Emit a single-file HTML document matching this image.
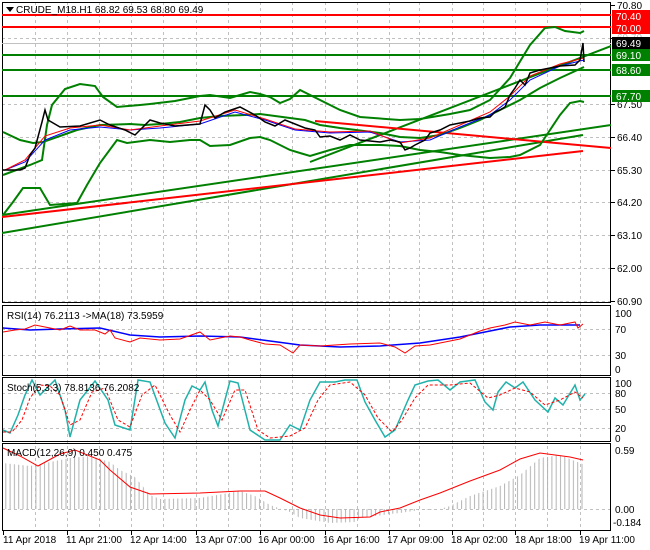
<!DOCTYPE html>
<html><head><meta charset="utf-8"><style>
html,body{margin:0;padding:0;background:#fff;}
svg{display:block;font-family:"Liberation Sans",sans-serif;font-size:10px;}
</style></head><body>
<svg width="650" height="550" viewBox="0 0 650 550" xmlns="http://www.w3.org/2000/svg">
<defs>
<pattern id="hist" width="4.3" height="10" patternUnits="userSpaceOnUse"><rect x="1" y="0" width="1" height="10" fill="#b4b4b4"/></pattern>
<clipPath id="cm"><rect x="2" y="2" width="609" height="300"/></clipPath>
</defs>
<rect width="650" height="550" fill="#fff"/>
<g stroke="#c0c0c0" stroke-dasharray="3,3" stroke-width="1">
<path d="M35.5 2V531M67.5 2V531M99.5 2V531M131.5 2V531M163.5 2V531M196.5 2V531M228.5 2V531M260.5 2V531M292.5 2V531M325.5 2V531M357.5 2V531M389.5 2V531M419.5 2V531M452.5 2V531M483.5 2V531M515.5 2V531M547.5 2V531M580.5 2V531"/>
<path d="M2 38.5H611M2 104.5H611M2 137.5H611M2 170.5H611M2 202.5H611M2 235.5H611M2 268.5H611M2 301.5H611"/>
<path d="M2 329.5H611M2 355.5H611M2 393.5H611M2 409.5H611M2 428.5H611M2 509.5H611"/>
</g>
<g fill="none" stroke="#000" stroke-width="1">
<rect x="2.5" y="2.5" width="608" height="300"/>
<rect x="2.5" y="305.5" width="608" height="70"/>
<rect x="2.5" y="377.5" width="608" height="64"/>
<rect x="2.5" y="443.5" width="608" height="87"/>
</g>
<g stroke="#000"><path d="M3.5 531v4M67.5 531v4M131.5 531v4M196.5 531v4M260.5 531v4M325.5 531v4M389.5 531v4M452.5 531v4M515.5 531v4M580.5 531v4"/>
<path d="M611 5.5h4M611 38.5h4M611 104.5h4M611 137.5h4M611 170.5h4M611 202.5h4M611 235.5h4M611 268.5h4M611 301.5h4"/></g>
<g clip-path="url(#cm)">
<path d="M2 43.5H611" stroke="#c0c0c0"/>
<path d="M2 15H611M2 27H611" stroke="#f00" stroke-width="2"/>
<path d="M2 55H611M2 70H611M2 96H611" stroke="#008000" stroke-width="2"/>
<path d="M2 233L583 135M2 215L611 125M310 162L611 46" stroke="#008000" stroke-width="2" fill="none"/>
<path d="M2 217L583 151M315 121L611 148" stroke="#f00" stroke-width="2" fill="none"/>
<!-- upper -->
<path d="M3 175L30 165L42 160L47 125L52 105L65 89L80 84L95 86L103 97L117 107L140 105L150 104L175 101L200 96L210 95L230 98L240 95L250 92L260 94L270 97L280 103L290 99L300 90L320 100L340 110L360 117L400 120L420 119L450 114L470 110L490 100L510 78L530 45L545 28L555 27L565 31L580 33L584 31" stroke="#008000" stroke-width="2" fill="none"/>
<!-- middle -->
<path d="M3 132L20 140L33 143L43 142L60 136L77 130L100 125L130 124L145 125L160 124L180 122L200 118L220 116L245 115L260 114L275 116L290 118L305 120L320 125L340 128L380 133L400 137L420 138L440 135L460 128L480 120L500 110L520 100L540 88L560 78L584 67" stroke="#008000" stroke-width="2" fill="none"/>
<!-- lower -->
<path d="M3 215L13 202L23 188L40 188L50 205L77 203L87 185L100 163L117 140L127 143L150 140L170 142L190 140L200 140L210 146L230 145L250 138L260 137L270 140L290 150L300 153L310 156L330 150L350 145L380 145L400 146L420 150L440 152L460 155L490 158L510 157L520 155L530 150L540 145L550 130L560 115L570 103L580 101L584 102" stroke="#008000" stroke-width="2" fill="none"/>
<path d="M5 170L25 162L45 140L70 130L100 127L130 130L160 128L200 124L235 112L265 120L295 130L330 133L370 132L400 142L430 140L460 127L490 115L510 100L530 80L560 66L584 60" stroke="#00f" fill="none"/>
<path d="M5 170L25 160L45 136L70 128L100 125L130 130L160 126L200 121L235 110L265 119L295 129L330 132L370 131L400 143L430 138L460 125L490 112L510 96L530 76L560 64L584 58" stroke="#f00" fill="none"/>
<path d="M3 170L20 170L25 168L30 155L35 148L42 122L45 110L48 120L60 127L80 126L100 120L110 125L125 130L135 135L140 130L150 120L160 123L175 126L200 124L205 105L210 110L215 118L225 112L240 107L255 115L265 122L275 126L285 120L295 124L305 128L315 130L320 137L330 136L340 140L350 135L360 140L380 142L390 140L400 142L405 150L410 148L415 145L425 140L430 133L440 130L450 125L460 123L470 121L480 118L490 117L495 112L500 110L505 107L510 95L515 88L520 80L525 85L530 73L540 70L560 66L575 65L580 60L583 43L584 62" stroke="#000" stroke-width="1.5" fill="none"/>
</g>
<path d="M6 7l4 5 4-5z" fill="#000"/>
<text x="16" y="13" fill="#000">CRUDE_M18.H1  68.82 69.53 68.80 69.49</text>
<g fill="#000">
<text x="617" y="9">70.80</text>
<text x="617" y="108">67.50</text><text x="617" y="141">66.40</text><text x="617" y="174">65.30</text><text x="617" y="206">64.20</text><text x="617" y="239">63.10</text><text x="617" y="272">62.00</text><text x="617" y="305">60.90</text>
</g>
<rect x="612" y="10" width="38" height="12" fill="#f00"/><text x="616" y="20" fill="#fff">70.40</text>
<rect x="612" y="22" width="38" height="12" fill="#f00"/><text x="616" y="32" fill="#fff">70.00</text>
<text x="617" y="41" fill="#bbb">69.70</text>
<rect x="612" y="37" width="38" height="13" fill="#000"/><text x="616" y="47" fill="#fff">69.49</text>
<rect x="612" y="49" width="38" height="12" fill="#008000"/><text x="616" y="59" fill="#fff">69.10</text>
<rect x="612" y="64" width="38" height="12" fill="#008000"/><text x="616" y="74" fill="#fff">68.60</text>
<rect x="612" y="90" width="38" height="12" fill="#008000"/><text x="616" y="100" fill="#fff">67.70</text>
<path d="M3 328L30 330L60 329L100 328L130 335L160 337L200 336L240 337L270 341L300 345L340 347L380 346L420 343L460 337L490 331L510 327L540 325L580 325" stroke="#00f" stroke-width="1.5" fill="none"/>
<path d="M3 332L15 330L25 329L35 325L45 327L60 330L70 326L80 330L95 330L105 334L110 330L115 338L130 342L140 338L160 340L180 339L200 332L210 340L230 336L240 337L250 340L265 344L280 345L293 353L300 345L320 346L350 344L380 343L395 347L405 353L415 346L430 345L450 341L460 339L480 331L490 328L505 325L515 322L530 325L545 322L560 325L575 322L578 328L583 324" stroke="#f00" fill="none"/>
<text x="7" y="319" fill="#000">RSI(14) 76.2113  -&gt;MA(18) 73.5959</text>
<g fill="#000"><text x="615" y="317">100</text><text x="615" y="333">70</text><text x="615" y="359">30</text><text x="615" y="373">0</text></g>
<path d="M3 430L10 433L18 415L25 395L32 380L40 395L55 380L65 410L70 437L80 400L95 381L108 400L115 425L130 430L138 380L150 382L165 423L175 438L185 400L192 386L200 390L205 382L212 410L218 426L230 381L238 383L250 430L265 440L280 440L290 425L300 430L310 400L320 382L335 382L345 380L357 380L365 402L375 420L385 437L395 430L408 400L415 385L428 381L438 380L450 390L460 382L475 380L485 402L493 410L498 392L506 382L515 388L523 382L535 400L548 412L555 398L563 405L575 385L580 400L585 394" stroke="#20b2aa" stroke-width="1.5" fill="none"/>
<path d="M3 432L12 432L22 420L30 398L40 385L50 386L60 395L70 425L80 420L92 392L105 388L118 420L130 427L142 395L155 385L170 415L180 432L190 410L200 390L210 400L222 420L235 390L245 390L258 430L270 438L290 436L305 428L318 400L330 385L350 382L365 395L378 418L392 432L402 420L415 398L428 385L450 385L470 383L488 398L500 395L515 388L530 392L545 405L560 400L575 392L583 398" stroke="#f00" stroke-dasharray="3,2" fill="none"/>
<text x="7" y="391" fill="#000">Stoch(5,3,3) 78.8136 76.2082</text>
<g fill="#000"><text x="615" y="387">100</text><text x="615" y="397">80</text><text x="615" y="413">50</text><text x="615" y="432">20</text><text x="615" y="442">0</text></g>
<path d="M3 509V463L30 466L50 462L70 458L90 456L110 462L120 470L135 477L150 495L160 499L200 498L240 491L255 496L270 505L290 512L300 518L330 523L355 522L360 518L390 514L400 513L420 510L440 509V509L450 506L470 496L500 486L520 475L540 458L560 455L585 465V509Z" fill="url(#hist)"/>
<path d="M3 448L20 456L38 466L60 454L75 450L100 460L110 470L130 487L150 494L200 493L240 491L265 491L280 498L300 508L320 515L340 518L370 517L380 512L400 508L420 500L440 493L470 481L500 470L520 459L540 453L555 455L570 457L583 460" stroke="#f00" fill="none"/>
<text x="7" y="456" fill="#000">MACD(12,26,9) 0.450 0.475</text>
<g fill="#000"><text x="615" y="454">0.59</text><text x="615" y="513">0.00</text><text x="613" y="526">-0.184</text></g>
<g fill="#000">
<text x="3" y="543">11 Apr 2018</text><text x="66" y="543">11 Apr 21:00</text><text x="130" y="543">12 Apr 14:00</text><text x="195" y="543">13 Apr 07:00</text><text x="258" y="543">16 Apr 00:00</text><text x="323" y="543">16 Apr 16:00</text><text x="387" y="543">17 Apr 09:00</text><text x="451" y="543">18 Apr 02:00</text><text x="515" y="543">18 Apr 18:00</text><text x="579" y="543">19 Apr 11:00</text>
</g>
</svg>
</body></html>
